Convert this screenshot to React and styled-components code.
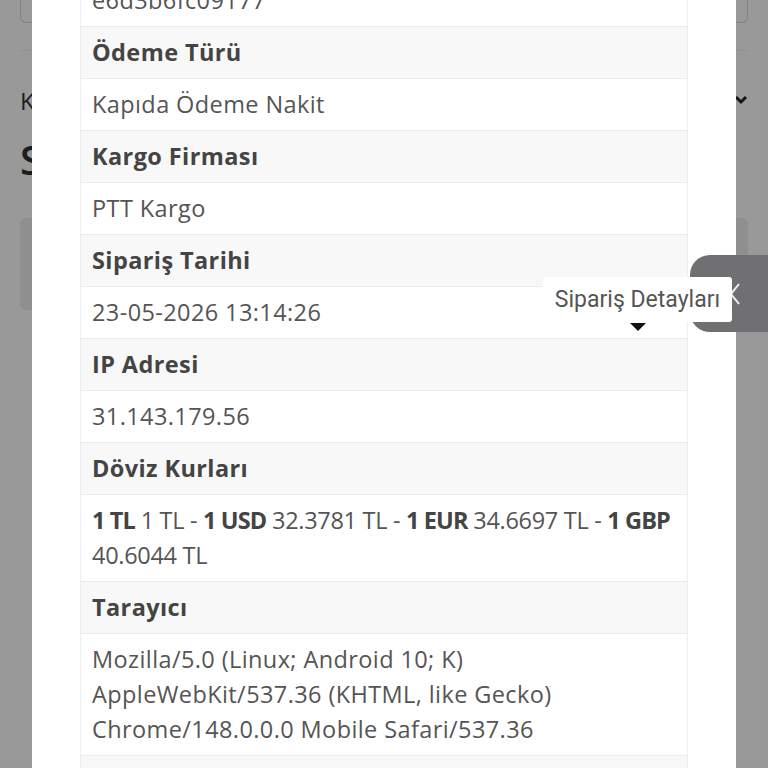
import React from 'react';
import styled, { createGlobalStyle } from 'styled-components';

const GlobalStyle = createGlobalStyle`
  html, body {
    margin: 0;
    padding: 0;
    height: 100%;
    overflow: hidden;
    background: #ffffff;
    font-family: "Open Sans", "Noto Sans", sans-serif;
  }
`;

const Page = styled.div`
  padding: 0 20px;
  color: #333;
`;

const TopBar = styled.div`
  height: 50px;
  border-bottom: 1px solid #f0f0f0;
`;

const SearchBox = styled.div`
  height: 22px;
  border: 1px solid #d8d8d8;
  border-top: none;
  border-radius: 0 0 6px 6px;
`;

const FilterRow = styled.div`
  display: flex;
  align-items: center;
  justify-content: space-between;
  height: 48px;
  margin-top: 25px;
  font-size: 24px;
`;

const PageTitle = styled.h1`
  margin: 10px 0 0;
  font-size: 40px;
  font-weight: 600;
  line-height: 52px;
`;

const Card = styled.div`
  margin-top: 32px;
  height: 92px;
  border-radius: 6px;
  background: #eeeeee;
`;

const Overlay = styled.div`
  position: fixed;
  inset: 0;
  background: rgba(0, 0, 0, 0.4);
`;

const Modal = styled.div`
  position: fixed;
  top: 0;
  bottom: 0;
  left: 32px;
  right: 32px;
  background: #ffffff;
  padding: 0 48px;
  overflow: hidden;
`;

const DetailTable = styled.div`
  margin-top: -26px;
  border: 1px solid #eeeeee;
  border-bottom: none;
`;

const Row = styled.div`
  padding: 8px 11px;
  line-height: 35px;
  font-size: 23.5px;
  letter-spacing: ${(p) => (p.$tight ? '-0.3px' : '0.4px')};
  border-bottom: 1px solid #ececec;
  background: ${(p) => (p.$head ? '#f8f8f8' : '#ffffff')};
  color: ${(p) => (p.$head ? '#444' : '#555')};
  font-weight: ${(p) => (p.$head ? 700 : 400)};
`;

const Strong = styled.b`
  font-weight: 700;
  color: #444;
  letter-spacing: -0.9px;
  white-space: nowrap;
`;

const FloatButton = styled.div`
  position: fixed;
  top: 255px;
  left: 690px;
  width: 100px;
  height: 77px;
  border-radius: 20px;
  background: #707073;
  display: flex;
  align-items: center;
  padding-left: 39px;
  box-sizing: border-box;
`;

const Tooltip = styled.div`
  position: fixed;
  top: 277px;
  left: 543px;
  width: 189px;
  height: 45px;
  box-sizing: border-box;
  background: #ffffff;
  border-radius: 3px;
  display: flex;
  align-items: center;
  justify-content: center;
  font-family: Roboto, "Noto Sans", sans-serif;
  font-size: 23px;
  color: #555;
  &::after {
    content: '';
    position: absolute;
    top: 46px;
    left: 87px;
    border-left: 8px solid transparent;
    border-right: 8px solid transparent;
    border-top: 8px solid #111;
  }
`;

const rows = [
  { v: 'e6d3b6fc09177' },
  { h: 'Ödeme Türü' },
  { v: 'Kapıda Ödeme Nakit' },
  { h: 'Kargo Firması' },
  { v: 'PTT Kargo' },
  { h: 'Sipariş Tarihi' },
  { v: '23-05-2026 13:14:26' },
  { h: 'IP Adresi' },
  { v: '31.143.179.56' },
  { h: 'Döviz Kurları' },
];

export default function App() {
  return (
    <>
      <GlobalStyle />
      <Page>
        <TopBar>
          <SearchBox />
        </TopBar>
        <FilterRow>
          <span>Kategori</span>
          <svg width="14" height="10" viewBox="0 0 14 10">
            <path d="M2 2l5 5 5-5" fill="none" stroke="#222" strokeWidth="3" />
          </svg>
        </FilterRow>
        <PageTitle>Siparişler</PageTitle>
        <Card />
      </Page>
      <Overlay />
      <Modal>
        <DetailTable>
          {rows.map((r, i) =>
            r.h ? (
              <Row $head key={i}>{r.h}</Row>
            ) : (
              <Row key={i}>{r.v}</Row>
            )
          )}
          <Row $tight>
            <Strong>1 TL</Strong> 1 TL - <Strong>1 USD</Strong> 32.3781 TL - <Strong>1 EUR</Strong> 34.6697 TL - <Strong>1 GBP</Strong> 40.6044 TL
          </Row>
          <Row $head>Tarayıcı</Row>
          <Row>
            Mozilla/5.0 (Linux; Android 10; K) AppleWebKit/537.36 (KHTML, like Gecko) Chrome/148.0.0.0 Mobile Safari/537.36
          </Row>
          <Row $head>Durum</Row>
        </DetailTable>
      </Modal>
      <FloatButton>
        <svg width="12" height="22" viewBox="0 0 12 22">
          <path d="M10 1L2 11l8 10" fill="none" stroke="#f4f4f4" strokeWidth="2" />
        </svg>
      </FloatButton>
      <Tooltip>Sipariş Detayları</Tooltip>
    </>
  );
}
